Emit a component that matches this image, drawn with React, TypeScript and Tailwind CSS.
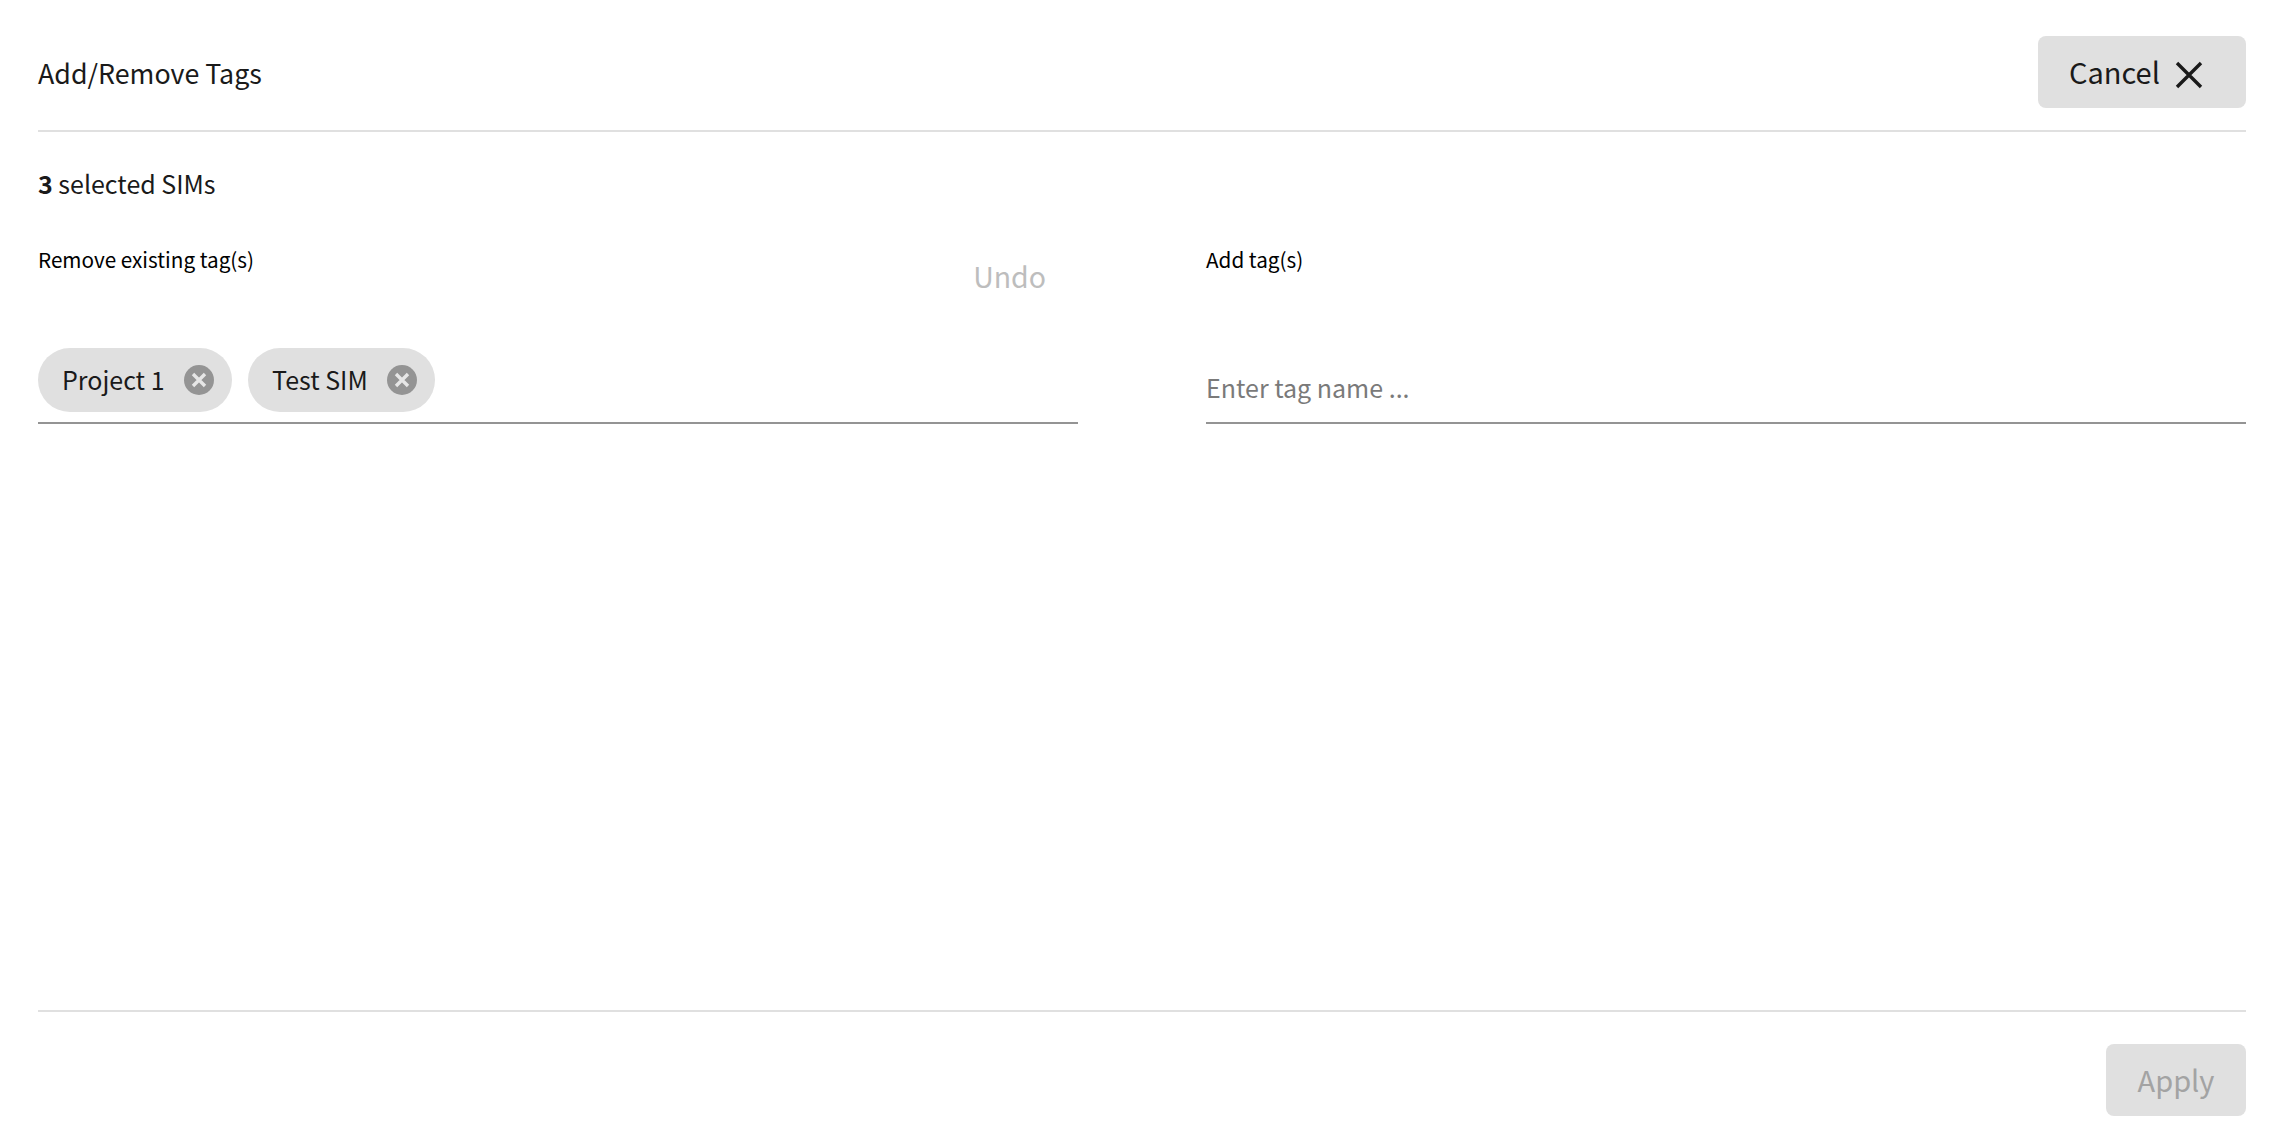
const FONT = "font-['Noto_Sans_CJK_JP','Noto_Sans',sans-serif]";

function CrossIcon({ className, size }: { className: string; size: number }) {
  return (
    <svg viewBox="0 0 28 28" width={size} height={size} fill="none" stroke="currentColor" strokeWidth="3.4" className={className}>
      <path d="M2 2 26 26M26 2 2 26" />
    </svg>
  );
}

function Tag({ name }: { name: string }) {
  return (
    <span className="flex h-16 items-center gap-[19.5px] rounded-full bg-[#e0e0e0] pl-6 pr-[18px] text-[25px] leading-none text-[#1a1a1a]">
      <span className="-mt-0.5">{name}</span>
      <span className="flex size-[30px] items-center justify-center rounded-full bg-[#949494]">
        <svg viewBox="0 0 16 16" width={16} height={16} fill="none" stroke="#e6e6e6" strokeWidth="3.4">
          <path d="M2 2 14 14M14 2 2 14" />
        </svg>
      </span>
    </span>
  );
}

export default function App() {
  return (
    <div className={`flex h-[1140px] flex-col bg-white pl-[38px] pr-[34px] ${FONT}`}>
      <header className="flex h-[132px] items-start justify-between border-b-2 border-[#e0e0e0] pt-9">
        <h1 className="mt-[19px] text-[26.8px] leading-9 font-normal text-[#1a1a1a]">Add/Remove Tags</h1>
        <button
          type="button"
          className="flex h-[72px] w-[208px] items-center gap-[15px] rounded-lg bg-[#e0e0e0] pb-0.5 pl-[31px] text-[29px] leading-none text-[#1a1a1a]"
        >
          Cancel
          <CrossIcon size={28} className="mt-2" />
        </button>
      </header>

      <p className="mt-[33px] text-[25px] leading-9 text-[#1a1a1a]">
        <strong className="font-bold">3</strong> selected SIMs
      </p>

      <div className="mt-[19px] grid grid-cols-2 gap-[128px]">
        <div>
          <div className="flex h-[128px] items-start justify-between pr-8">
            <label className="mt-[23px] text-[20.7px] leading-8 text-black">Remove existing tag(s)</label>
            <button type="button" className="mt-[38px] text-[28.5px] leading-9 text-[#bdbdbd]">
              Undo
            </button>
          </div>
          <div className="flex h-[76px] gap-4 border-b-2 border-[#949494] pb-2.5">
            <Tag name="Project 1" />
            <Tag name="Test SIM" />
          </div>
        </div>
        <div>
          <div className="h-[128px] pt-[23px]">
            <label className="block text-[20.7px] leading-8 text-black">Add tag(s)</label>
          </div>
          <div className="flex h-[76px] items-end border-b-2 border-[#949494] pb-[17px]">
            <input
              placeholder="Enter tag name ..."
              className="w-full bg-transparent text-[25px] leading-9 text-[#1a1a1a] outline-none placeholder:text-[#7a7a7a]"
            />
          </div>
        </div>
      </div>

      <footer className="mt-auto flex h-[130px] items-start justify-end border-t-2 border-[#e0e0e0] pt-8">
        <button
          type="button"
          disabled
          className="flex h-[72px] w-[140px] items-center justify-center rounded-lg bg-[#e0e0e0] pb-0.5 text-[29px] leading-none text-[#a3a3a3]"
        >
          Apply
        </button>
      </footer>
    </div>
  );
}
